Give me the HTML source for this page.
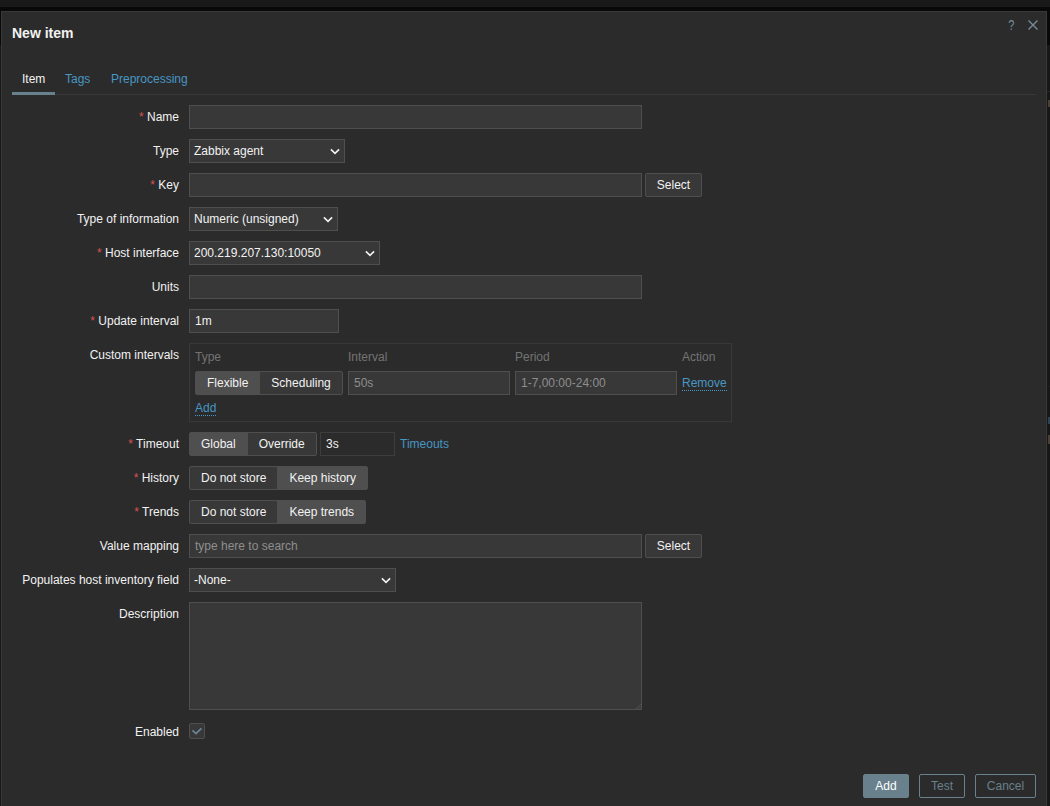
<!DOCTYPE html>
<html lang="en">
<head>
<meta charset="utf-8">
<title>New item</title>
<style>
*{box-sizing:border-box;}
html,body{margin:0;padding:0;}
body{width:1050px;height:806px;overflow:hidden;background:#171717;font-family:"Liberation Sans",Arial,sans-serif;font-size:12px;line-height:14px;color:#f2f2f2;position:relative;}
.topstrip{position:absolute;left:0;top:0;width:1050px;height:7px;background:#191919;}
.shadow{position:absolute;left:0;top:7px;width:1050px;height:38px;background:#080808;}
.rline{position:absolute;left:1047px;top:91px;width:3px;height:1px;background:#272727;}
.rmark{position:absolute;left:1048px;top:100px;width:2px;height:7px;background:#4a4034;}
.dlg{position:absolute;left:1px;top:11px;width:1046px;height:810px;background:#2b2b2b;border:1px solid #383838;}
h4{position:absolute;left:10px;top:13px;margin:0;font-size:14px;line-height:16px;font-weight:bold;color:#f2f2f2;}
.help{position:absolute;left:1006px;top:6px;font-size:12px;line-height:14px;color:#768d99;transform:scale(0.92,1.16);transform-origin:50% 50%;}
.close{position:absolute;left:1025px;top:7px;width:12px;height:12px;}
.tabs{position:absolute;left:10px;top:53px;width:1024px;height:30px;border-bottom:1px solid #383838;}
.tabs a{position:absolute;top:0;height:30px;padding:7px 10px 0;color:#4796c4;text-decoration:none;}
.tabs a.sel{color:#f2f2f2;border-bottom:3px solid #69808d;}
.row{position:absolute;left:0;height:24px;}
label.l{position:absolute;left:0;width:177px;text-align:right;line-height:14px;color:#f2f2f2;}
label.l i{font-style:normal;color:#d85252;}
.inp{position:absolute;height:24px;background:#383838;border:1px solid #4f4f4f;color:#f2f2f2;padding:4px 5px;line-height:14px;white-space:nowrap;overflow:hidden;}
.inp.ro{color:#8e8e8e;}
.sel{padding-left:4px;}
.sel svg{position:absolute;right:4px;top:8px;}
.btn{position:absolute;height:24px;border-radius:2px;background:#383838;border:1px solid #4f4f4f;color:#f2f2f2;text-align:center;line-height:22px;}
.seg{position:absolute;height:24px;display:flex;border:1px solid #4f4f4f;background:#383838;border-radius:2px;}
.seg span{display:block;height:22px;line-height:22px;padding:0 11px;color:#f2f2f2;}
.seg span.on{background:#4f4f4f;}
.seg span+span{border-left:1px solid #4f4f4f;}
a.lnk{position:absolute;color:#4796c4;text-decoration:none;line-height:14px;}
a.dot{border-bottom:1px dotted #4796c4;}
.grey{color:#737373;position:absolute;line-height:14px;}
</style>
</head>
<body>
<div class="topstrip"></div>
<div class="shadow"></div>
<div class="rline"></div>
<div class="rmark"></div>
<div class="rmark" style="top:417px;background:#2c4355"></div>
<div class="rmark" style="top:435px;height:9px"></div>
<div class="rline" style="top:386px;background:#1f1f1f"></div>
<div class="dlg">
  <h4>New item</h4>
  <div class="help">?</div>
  <svg class="close" viewBox="0 0 12 12"><path d="M1.5 1.5 L10.5 10.5 M10.5 1.5 L1.5 10.5" stroke="#768d99" stroke-width="1.4" fill="none"/></svg>
  <div class="tabs">
    <a class="sel" style="left:0">Item</a>
    <a style="left:43px">Tags</a>
    <a style="left:89px">Preprocessing</a>
  </div>

  <!-- Name -->
  <label class="l" style="top:98px"><i>*</i> Name</label>
  <div class="inp" style="left:187px;top:93px;width:453px"></div>

  <!-- Type -->
  <label class="l" style="top:132px">Type</label>
  <div class="inp sel" style="left:187px;top:127px;width:156px">Zabbix agent<svg width="10" height="7" viewBox="0 0 10 7"><path d="M0.9 1.4 L5 5.4 L9.1 1.4" stroke="#f2f2f2" stroke-width="1.6" fill="none"/></svg></div>

  <!-- Key -->
  <label class="l" style="top:166px"><i>*</i> Key</label>
  <div class="inp" style="left:187px;top:161px;width:453px"></div>
  <div class="btn" style="left:643px;top:161px;width:57px">Select</div>

  <!-- Type of information -->
  <label class="l" style="top:200px">Type of information</label>
  <div class="inp sel" style="left:187px;top:195px;width:149px">Numeric (unsigned)<svg width="10" height="7" viewBox="0 0 10 7"><path d="M0.9 1.4 L5 5.4 L9.1 1.4" stroke="#f2f2f2" stroke-width="1.6" fill="none"/></svg></div>

  <!-- Host interface -->
  <label class="l" style="top:234px"><i>*</i> Host interface</label>
  <div class="inp sel" style="left:187px;top:229px;width:191px">200.219.207.130:10050<svg width="10" height="7" viewBox="0 0 10 7"><path d="M0.9 1.4 L5 5.4 L9.1 1.4" stroke="#f2f2f2" stroke-width="1.6" fill="none"/></svg></div>

  <!-- Units -->
  <label class="l" style="top:268px">Units</label>
  <div class="inp" style="left:187px;top:263px;width:453px"></div>

  <!-- Update interval -->
  <label class="l" style="top:302px"><i>*</i> Update interval</label>
  <div class="inp" style="left:187px;top:297px;width:150px">1m</div>

  <!-- Custom intervals -->
  <label class="l" style="top:336px">Custom intervals</label>
  <div style="position:absolute;left:187px;top:331px;width:543px;height:79px;border:1px solid #383838;"></div>
  <span class="grey" style="left:193px;top:338px">Type</span>
  <span class="grey" style="left:346px;top:338px">Interval</span>
  <span class="grey" style="left:513px;top:338px">Period</span>
  <span class="grey" style="left:680px;top:338px">Action</span>
  <div class="seg" style="left:193px;top:359px"><span class="on">Flexible</span><span>Scheduling</span></div>
  <div class="inp ro" style="left:346px;top:359px;width:162px">50s</div>
  <div class="inp ro" style="left:513px;top:359px;width:162px">1-7,00:00-24:00</div>
  <a class="lnk dot" style="left:680px;top:364px">Remove</a>
  <a class="lnk dot" style="left:193px;top:389px">Add</a>

  <!-- Timeout -->
  <label class="l" style="top:425px"><i>*</i> Timeout</label>
  <div class="seg" style="left:187px;top:420px"><span class="on">Global</span><span>Override</span></div>
  <div class="inp" style="left:318px;top:420px;width:75px;background:#2b2b2b;border-color:#3d3d3d">3s</div>
  <a class="lnk" style="left:398px;top:425px">Timeouts</a>

  <!-- History -->
  <label class="l" style="top:459px"><i>*</i> History</label>
  <div class="seg" style="left:187px;top:454px"><span>Do not store</span><span class="on">Keep history</span></div>

  <!-- Trends -->
  <label class="l" style="top:493px"><i>*</i> Trends</label>
  <div class="seg" style="left:187px;top:488px"><span>Do not store</span><span class="on">Keep trends</span></div>

  <!-- Value mapping -->
  <label class="l" style="top:527px">Value mapping</label>
  <div class="inp" style="left:187px;top:522px;width:453px;color:#8e8e8e">type here to search</div>
  <div class="btn" style="left:643px;top:522px;width:57px">Select</div>

  <!-- Inventory -->
  <label class="l" style="top:561px">Populates host inventory field</label>
  <div class="inp sel" style="left:187px;top:556px;width:207px">-None-<svg width="10" height="7" viewBox="0 0 10 7"><path d="M0.9 1.4 L5 5.4 L9.1 1.4" stroke="#f2f2f2" stroke-width="1.6" fill="none"/></svg></div>

  <!-- Description -->
  <label class="l" style="top:595px">Description</label>
  <div class="inp" style="left:187px;top:590px;width:453px;height:108px"><svg width="7" height="7" viewBox="0 0 7 7" style="position:absolute;right:0;bottom:0"><path d="M2 7 L7 2 M4.6 7 L7 4.6" stroke="#545454" stroke-width="0.9" fill="none"/></svg></div>

  <!-- Enabled -->
  <label class="l" style="top:713px">Enabled</label>
  <div style="position:absolute;left:187px;top:711px;width:16px;height:16px;background:#383838;border:1px solid #4f4f4f;border-radius:2px;">
    <svg width="16" height="16" viewBox="0 0 16 16" style="position:absolute;left:-1px;top:-1px"><path d="M3.5 7.4 L7 10.6 L12.4 5.4" stroke="#6a8596" stroke-width="1.75" fill="none"/></svg>
  </div>

  <!-- Buttons -->
  <div class="btn" style="left:861px;top:762px;width:46px;background:#69808d;border-color:#69808d;color:#fff">Add</div>
  <div class="btn" style="left:917px;top:762px;width:46px;background:transparent;border-color:#69808d;color:#69808d">Test</div>
  <div class="btn" style="left:973px;top:762px;width:61px;background:transparent;border-color:#69808d;color:#69808d">Cancel</div>
</div>
</body>
</html>
